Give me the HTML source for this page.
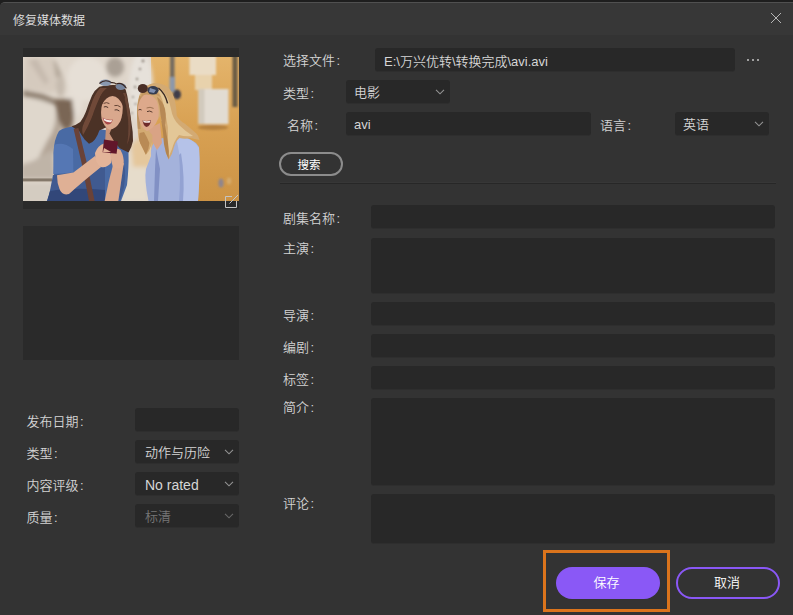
<!DOCTYPE html>
<html lang="zh-CN">
<head>
<meta charset="utf-8">
<title>修复媒体数据</title>
<style>
*{box-sizing:border-box;margin:0;padding:0}
html{width:793px;height:615px;overflow:hidden;background:#1e1e1e}
body{width:793px;height:615px;overflow:hidden;background:#1e1e1e}
#win{left:0;top:2px;width:793px;height:613px;background:#333333;border-top:1px solid #505050;border-top-left-radius:5px;overflow:hidden}
body{position:relative;font-family:"Liberation Sans","Noto Sans CJK SC",sans-serif;font-size:13px;color:#d2d2d2;font-weight:350}
.abs{position:absolute}
#titlebar{left:0;top:0;width:793px;height:32px;background:#373737}
#title{left:13px;top:12px;font-size:12px;line-height:18px;color:#e2e2e2;white-space:nowrap}
.lbl{position:absolute;white-space:nowrap;line-height:18px;height:18px;color:#d4d4d4;font-size:13px}
.fld{position:absolute;background:#282828;border-radius:3px;box-shadow:0 1px 0 #2e2e2e}
.c{margin-left:1.5px}
.txt{position:absolute;white-space:nowrap;line-height:18px;height:18px;color:#d6d6d6;font-size:13px}
.chev{position:absolute;width:9px;height:6px}
.btn{position:absolute;border-radius:16px;text-align:center;color:#fff;font-size:13px;line-height:18px}
</style>
</head>
<body>
<div class="abs" id="win"><div class="abs" id="titlebar"></div></div>
<div class="abs" id="title">修复媒体数据</div>
<svg class="abs" style="left:770px;top:12px" width="12" height="12" viewBox="0 0 12 12"><path d="M1 1 L11 11 M11 1 L1 11" stroke="#b6b6b6" stroke-width="1" fill="none"/></svg>

<!-- left column: thumbnail -->
<div class="abs" id="thumbbox" style="left:23px;top:48px;width:216px;height:161px;background:#2a2a2a"></div>
<!--PHOTO--><svg class="abs" id="photo" style="left:23px;top:57px" width="216" height="144" viewBox="0 0 216 144">
<defs>
<filter id="b1" x="-5%" y="-5%" width="110%" height="110%"><feGaussianBlur stdDeviation="0.7"/></filter>
<filter id="b2" x="-10%" y="-10%" width="120%" height="120%"><feGaussianBlur stdDeviation="2"/></filter>
<filter id="b3" x="-10%" y="-10%" width="120%" height="120%"><feGaussianBlur stdDeviation="1.2"/></filter>
<linearGradient id="wall" x1="0" y1="0" x2="0" y2="1"><stop offset="0" stop-color="#e4b46b"/><stop offset="0.45" stop-color="#d9a254"/><stop offset="1" stop-color="#cc9345"/></linearGradient>
<clipPath id="pc"><rect x="0" y="0" width="216" height="144"/></clipPath>
</defs>
<g clip-path="url(#pc)">
<rect width="216" height="144" fill="#dfd6cb"/>
<!-- orange wall -->
<rect x="128" y="0" width="88" height="144" fill="url(#wall)"/>
<g filter="url(#b2)">
<!-- statue shading -->
<path d="M24 2 L32 3 L40 20 L37 24 L29 16 Z" fill="#b3a79a"/>
<path d="M2 0 L30 0 L34 30 L30 36 L0 32 Z" fill="#d5cabe"/>
<path d="M6 4 L14 2 L26 24 L22 28 Z" fill="#c6baae"/>
<ellipse cx="37.500" cy="29" rx="4.500" ry="11" fill="#c6bbaf"/>
<ellipse cx="52" cy="42" rx="8" ry="18" fill="#e5ded5"/>
<ellipse cx="64" cy="22" rx="20" ry="22" fill="#e6dfd6"/>
<ellipse cx="14" cy="72" rx="21" ry="31" fill="#dfd7cc"/>
<path d="M24 84 Q34 70 33 52 L38 60 Q40 80 30 100 L14 104 Z" fill="#b3a597"/>
<path d="M0 33 L20 37 L36 44 L35 49 L18 43 L0 39 Z" fill="#8f8071"/>
<path d="M31 42 L49 42 L51 58 L49 70 L41 73 L35 62 Z" fill="#7a6654"/>
<path d="M40 72 L49 70 L44 92 L36 96 Z" fill="#9c8c7c"/>
<ellipse cx="92" cy="10" rx="9" ry="10" fill="#aaa095"/>
<ellipse cx="118" cy="30" rx="12" ry="34" fill="#e6e1da"/>
<path d="M-2 108 L10 104 L30 92 L32 122 L-2 122 Z" fill="#bfb4a7"/>
<rect x="-2" y="126" width="34" height="20" fill="#d4ccc1"/>
<path d="M100 96 L124 92 L124 144 L98 144 Z" fill="#e6dccb"/>
<path d="M108 88 L128 70 L130 110 L110 110 Z" fill="#e5c79c"/>
</g>
<g filter="url(#b3)">
<rect x="166.5" y="-2" width="26.5" height="20" fill="#eadcc5"/>
<rect x="172" y="18" width="17" height="15" fill="#e8d2ac"/>
<rect x="175.5" y="32" width="30" height="35" fill="#e2dcd2"/>
<rect x="175.5" y="32" width="6" height="35" fill="#d2cabd"/>
<rect x="147" y="-2" width="4.5" height="26" fill="#756c60"/>
<rect x="146.5" y="20" width="5.5" height="15" fill="#8c98aa"/>
<ellipse cx="154" cy="37.5" rx="4" ry="5" fill="#3f3e4a"/>
<rect x="209.5" y="-2" width="5" height="52" fill="#6b5b45"/>
<ellipse cx="198" cy="126" rx="2.6" ry="4.6" fill="#8f868f"/>
<ellipse cx="206" cy="124" rx="2.2" ry="3.6" fill="#d6ab6c"/>
<ellipse cx="190" cy="70.500" rx="15" ry="2.6" fill="#b5813f"/>
<circle cx="112" cy="30" r="1.2" fill="#8d857c"/><circle cx="110" cy="40" r="1" fill="#8d857c"/><circle cx="112.500" cy="47" r="1.1" fill="#8d857c"/><circle cx="109" cy="56" r="1" fill="#9a9188"/><circle cx="114" cy="22" r="1.2" fill="#8d857c"/><circle cx="117" cy="12" r="1.3" fill="#9a9188"/><circle cx="120" cy="4" r="1.4" fill="#8d857c"/>
</g>
<g filter="url(#b1)">
<!-- wall items -->

<rect x="-1" y="121.4" width="30" height="3" fill="#84786a"/>
<!-- blonde: shirt -->
<path d="M128 99 Q127 88 134 82 L153 79 Q170 80 176 90 Q177.5 112 175 144 L125.5 144 Q121 122 123 112 Z" fill="#a4b2db"/>
<path d="M153 80 Q170 80 176 91 Q177.5 112 175 144 L160 144 Q160 110 153 80 Z" fill="#b5c2e8"/>
<path d="M158 96 Q162 120 160 144 L156 144 Q158 120 156 98 Z" fill="#93a2d2"/>
<path d="M133 92 L137 112 L135 144 L131 144 L132 112 Z" fill="#8190c4"/>
<!-- blonde neck -->
<path d="M125 72 L137 66 L139 86 L134 93 L129 84 Z" fill="#d9a385"/>
<!-- blonde hair -->
<path d="M131 26 Q122 27 116.4 38 Q113.4 48 114 58.7 L114.8 71.7 Q114.6 80 117.2 86.3 L122.9 97.7 Q126.6 94 127.8 89.5 Q130 84 129.4 78.2 L126 74 L137.5 58.7 L140 74 Q140.4 86 143 96 L145.7 102.5 Q149.6 97 151 90 Q152.6 84 156.6 81 Q162 82.6 167 81 L176.5 83 Q176 79 173.3 76.5 Q167 71 162 66.8 Q156 63 153.8 58.7 Q153.4 50 152 44 Q150 36 145.7 31 Q140 26 131 26 Z" fill="#d3aa73"/>
<path d="M138 32 Q146 40 148 52 Q149.6 62 156 68 Q162 74 170 79 Q162 80 156 78 Q151 84 149 92 L146 99 Q144.6 90 145 80 Q145.6 70 143 60 Q141 48 139 42 Q137 36 134 33 Z" fill="#e3c797"/>
<path d="M116.4 39 Q113.8 48 114 58.7 L114.8 71.7 L117.6 72 Q116.6 62 117 54 Q117.6 46 120 40 Z" fill="#bd9260"/>
<path d="M116.6 76 Q115.4 82 117.2 86.3 L122.9 97.7 Q126 92 126.4 86 Q124 80 121 75 Z" fill="#b98a54"/>
<path d="M138.4 64 L140 76 Q140.4 87 143 96 L145.7 102.5 Q146.4 94 145 86 Q143.4 76 141.6 66 Z" fill="#b3844e"/>
<path d="M122 30 Q130 29.6 138 40 Q134 37.6 128 37.6 Q122 38 118 42 Q118 34 122 30 Z" fill="#c49862"/>
<path d="M134 40 Q140 44 142 52 Q144 62 141 72 L139 66 L137.500 58 Q137 48 134 40 Z" fill="#b78955"/>
<!-- blonde face -->
<path d="M121 38 Q128 36 134 44 Q137 54 135 62 Q131 72 124 74 Q119 72 116.5 64 Q114.5 56 115 50 Q116 42 121 38 Z" fill="#dda98b"/>
<path d="M119.5 63.5 Q124 64.5 128 63 Q127.5 69 123.5 70 Q120.5 69 119.5 63.5 Z" fill="#6e2a2c"/>
<path d="M120 63.6 Q124 64.8 127.6 63.4 L127 65.4 Q124 66.2 120.6 65.2 Z" fill="#f1e6e0"/>
<path d="M115.5 53 Q117 51.8 118.6 53" stroke="#4a2f26" stroke-width="0.9" fill="none"/>
<path d="M124 54.6 Q126.6 53.2 129.4 55.2" stroke="#4a2f26" stroke-width="0.9" fill="none"/>
<path d="M123.6 51 Q127 49.4 130.6 51.4" stroke="#8a6242" stroke-width="0.8" fill="none"/>
<!-- blonde sunglasses -->
<ellipse cx="119.8" cy="31.5" rx="5" ry="4.6" fill="#4a2f28"/>
<ellipse cx="130" cy="33.2" rx="5.6" ry="4.2" fill="#363c50"/>
<path d="M127 31 L133 33 L131 36 L126 35 Z" fill="#7f8fb0"/>
<path d="M135.4 31 Q142 36 144.6 46.4" stroke="#3a2a24" stroke-width="1.5" fill="none"/>

<!-- brunette dress -->
<path d="M36 74 Q44 68 62 70 L102 76 Q108 92 104 128 L98 144 L24 144 Q30 128 31 117 L30.5 96 Q31 82 36 74 Z" fill="#4a6aa4"/>
<path d="M30 118 L50 116 L82 110 L82 144 L25 144 Z" fill="#3f5a90"/>
<path d="M27 134 Q50 130 82 133 L82 144 L24 144 Z" fill="#324779"/>
<path d="M99 100 Q104 112 101 130 L97 144 L95.300 144 Q99 124 99 100 Z" fill="#3f5a90"/>
<path d="M31 88 Q40 84 50 92 L50.4 115.6 L30.2 117 Z" fill="#5577b4"/>
<!-- brunette neck -->
<path d="M83 70 L95 70 L97 84 L82 86 Z" fill="#c79379"/>
<!-- brunette hair -->
<path d="M89.5 28 Q82 28 76.3 29.7 Q71.6 33 69 38.5 Q65.4 47 63 54.6 Q60.6 61 57.3 64.9 Q53 68 48.5 69.3 Q52 72 55.8 73.6 Q58.6 78.6 61.6 82.4 L66 86.8 Q69.6 85.4 71.9 82.4 Q75 78.4 76.3 73.6 L84 70 L91 67.8 Q88 72 86.5 76.6 L90.9 83.9 L96.8 91.2 L105.6 95.6 Q108.6 90.6 110 83.9 Q110 74 108.5 66.3 Q107.4 56 105.6 47.3 Q104.6 38.6 102.6 32.6 Q97 27.6 89.5 28 Z" fill="#4c3026"/>
<path d="M77 31 Q71 38 68 48 Q65 58 61 66 Q58 72 60 78 Q65 70 69 60 Q73 48 77 40 Q80 34 84 31 Z" fill="#704a38"/>
<path d="M100 36 Q103.6 48 105 62 Q106 76 104 88 Q108.6 78 107.6 62 Q106 46 102.6 36 Z" fill="#684434"/>
<!-- brunette face -->
<path d="M87.7 35 Q95 35 99.5 46 Q100.5 56 97.5 64 Q93 72.5 86.4 72.7 Q81 70 78.6 62 Q77.4 54 79 48 Q82 38 87.7 35 Z" fill="#d9a88d"/>
<path d="M79.6 60.4 Q84 63.4 89.8 62.4 Q88.6 67.6 84.4 67.6 Q81 66 79.6 60.4 Z" fill="#a8484a"/>
<path d="M80.4 61.2 Q84.4 64 89 63 L88.4 65 Q84.4 65.8 81.2 63.6 Z" fill="#f6ece8"/>
<path d="M80.8 50 Q83 48.8 85.2 50.6" stroke="#3e2820" stroke-width="0.9" fill="none"/>
<path d="M91.6 53 Q94 52 96.4 54" stroke="#3e2820" stroke-width="0.9" fill="none"/>
<path d="M80.6 46.4 Q83.6 44.8 86.4 46.6" stroke="#5a3a2c" stroke-width="0.9" fill="none"/>
<path d="M91.4 48.6 Q94.6 47.6 97.6 50" stroke="#5a3a2c" stroke-width="0.9" fill="none"/>
<path d="M78.600 48 Q83 39.500 89.500 39 Q96 39.500 100 49 L102 40 Q96 30 89.500 30 Q82 30 77 40 Z" fill="#4f3228"/>
<!-- brunette sunglasses -->
<ellipse cx="82.5" cy="25.8" rx="6" ry="3.2" fill="#8a99b0"/>
<ellipse cx="97.8" cy="29.6" rx="5.2" ry="3.4" fill="#76849c"/>
<path d="M76.4 26.5 Q82 21.6 88.6 25.6 Q92 25.4 93 27 Q99 24.6 103.4 31.4" stroke="#3a2822" stroke-width="1.1" fill="none"/>
<!-- strap -->
<path d="M50.6 72 L55.4 71 L63.6 105 L71.6 144 L66 144 L58.6 106 Z" fill="#6a4337"/>
<!-- left arm -->
<path d="M34 118.3 L50.4 115.6 L72 99 L78 110 Q58 126 46 137 Q39 139 36.5 132 Q34 126 34 118.3 Z" fill="#dfb095"/>
<!-- right forearm -->
<path d="M90 108 L100.8 106 Q98 126 95.3 144 L81.7 144 Q85 126 90 108 Z" fill="#dcab90"/>
<!-- hands -->
<path d="M72 96 Q75 88 81 86.5 L86 94 Q90 98 88 106 Q84 111 78 110 Q72 106 72 96 Z" fill="#e3b499"/>
<path d="M88 94 Q93 90 97.5 93 Q101.5 100 100.6 108 Q96 114 90 110 Q87 102 88 94 Z" fill="#dead92"/>
<!-- phone -->
<path d="M81 82.6 L95 84.6 L93.6 96.8 L79.6 95.2 Z" fill="#62192a"/>
<path d="M81 91 L88 95 L80 95.2 Z" fill="#e3b499"/>
</g>
</g>
</svg><!--/PHOTO-->
<svg class="abs" style="left:224px;top:193px" width="16" height="16" viewBox="0 0 16 16"><path d="M8 3.5 H1.5 V14.5 H12.5 V8" stroke="#c4c4c4" stroke-width="1" fill="none"/><path d="M5.5 10.5 L14 2" stroke="#c4c4c4" stroke-width="1" fill="none"/></svg>
<div class="abs" style="left:23px;top:226px;width:216px;height:134px;background:#2a2a2a"></div>

<!-- left column: fields -->
<div class="lbl" style="left:26.5px;top:413px">发布日期<span class="c">:</span></div>
<div class="fld" style="left:135px;top:408px;width:104px;height:23px"></div>
<div class="lbl" style="left:26.5px;top:445px">类型<span class="c">:</span></div>
<div class="fld" style="left:135px;top:440px;width:104px;height:23px"></div>
<div class="txt" style="left:145px;top:444px">动作与历险</div>
<div class="lbl" style="left:26.5px;top:477px">内容评级<span class="c">:</span></div>
<div class="fld" style="left:135px;top:472px;width:104px;height:23px"></div>
<div class="txt" style="left:145px;top:476px;font-size:14px">No rated</div>
<div class="lbl" style="left:26.5px;top:509px">质量<span class="c">:</span></div>
<div class="fld" style="left:135px;top:504px;width:104px;height:23px"></div>
<div class="txt" style="left:145px;top:508px;color:#777">标清</div>

<!-- right column: top -->
<div class="lbl" style="left:283px;top:52px">选择文件<span class="c">:</span></div>
<div class="fld" style="left:375px;top:48px;width:360px;height:23px"></div>
<div class="txt" style="left:384px;top:53px">E:\万兴优转\转换完成\avi.avi</div>
<div class="lbl" style="left:283px;top:85px">类型<span class="c">:</span></div>
<div class="fld" style="left:346px;top:80px;width:104px;height:23px"></div>
<div class="txt" style="left:354px;top:84px">电影</div>
<div class="lbl" style="left:287px;top:117px">名称<span class="c">:</span></div>
<div class="fld" style="left:346px;top:112px;width:245px;height:23px"></div>
<div class="txt" style="left:354px;top:116px">avi</div>
<div class="lbl" style="left:600px;top:117px">语言<span class="c">:</span></div>
<div class="fld" style="left:675px;top:112px;width:94px;height:23px"></div>
<div class="txt" style="left:683px;top:116px">英语</div>
<div class="btn" style="left:279px;top:152px;width:64px;height:24px;border:2px solid #8c8c8c;line-height:22px;font-size:11.5px;font-weight:400;padding-right:4px">搜索</div>
<div class="abs" style="left:280px;top:182px;width:496px;height:1px;background:#373737"></div><div class="abs" style="left:280px;top:183px;width:496px;height:1px;background:#272727"></div>

<!-- right column: form -->
<div class="lbl" style="left:283px;top:210px">剧集名称<span class="c">:</span></div>
<div class="fld" style="left:371px;top:205px;width:404px;height:23px"></div>
<div class="lbl" style="left:283px;top:240px">主演<span class="c">:</span></div>
<div class="fld" style="left:371px;top:238px;width:404px;height:55px"></div>
<div class="lbl" style="left:283px;top:307px">导演<span class="c">:</span></div>
<div class="fld" style="left:371px;top:302px;width:404px;height:23px"></div>
<div class="lbl" style="left:283px;top:339px">编剧<span class="c">:</span></div>
<div class="fld" style="left:371px;top:334px;width:404px;height:23px"></div>
<div class="lbl" style="left:283px;top:371px">标签<span class="c">:</span></div>
<div class="fld" style="left:371px;top:366px;width:404px;height:23px"></div>
<div class="lbl" style="left:283px;top:399px">简介<span class="c">:</span></div>
<div class="fld" style="left:371px;top:398px;width:404px;height:87px"></div>
<div class="lbl" style="left:283px;top:495px">评论<span class="c">:</span></div>
<div class="fld" style="left:371px;top:494px;width:404px;height:49px"></div>

<!-- chevrons -->
<svg class="abs" style="left:434px;top:88px" width="12" height="8" viewBox="0 0 12 8"><path d="M2 1.8 L6 5.8 L10 1.8" stroke="#939393" stroke-width="1.1" fill="none"/></svg>
<svg class="abs" style="left:753px;top:120px" width="12" height="8" viewBox="0 0 12 8"><path d="M2 1.8 L6 5.8 L10 1.8" stroke="#939393" stroke-width="1.1" fill="none"/></svg>
<svg class="abs" style="left:223px;top:448px" width="12" height="8" viewBox="0 0 12 8"><path d="M2 1.8 L6 5.8 L10 1.8" stroke="#939393" stroke-width="1.1" fill="none"/></svg>
<svg class="abs" style="left:223px;top:480px" width="12" height="8" viewBox="0 0 12 8"><path d="M2 1.8 L6 5.8 L10 1.8" stroke="#939393" stroke-width="1.1" fill="none"/></svg>
<svg class="abs" style="left:223px;top:512px" width="12" height="8" viewBox="0 0 12 8"><path d="M2 1.8 L6 5.8 L10 1.8" stroke="#686868" stroke-width="1.1" fill="none"/></svg>
<div class="abs" style="left:747px;top:58.5px;width:2px;height:2px;background:#a0a0a0;box-shadow:5px 0 0 #a0a0a0,10px 0 0 #a0a0a0"></div>

<!-- buttons -->
<div class="abs" style="left:543px;top:550px;width:127px;height:62px;border:3px solid #db741c"></div>
<div class="btn" style="left:556px;top:567px;width:104px;height:32px;background:#8a58f6;line-height:32px;padding-right:3px">保存</div>
<div class="btn" style="left:676px;top:567px;width:104px;height:32px;border:2px solid #8a58f6;line-height:28px;padding-right:2px">取消</div>
</body>
</html>
